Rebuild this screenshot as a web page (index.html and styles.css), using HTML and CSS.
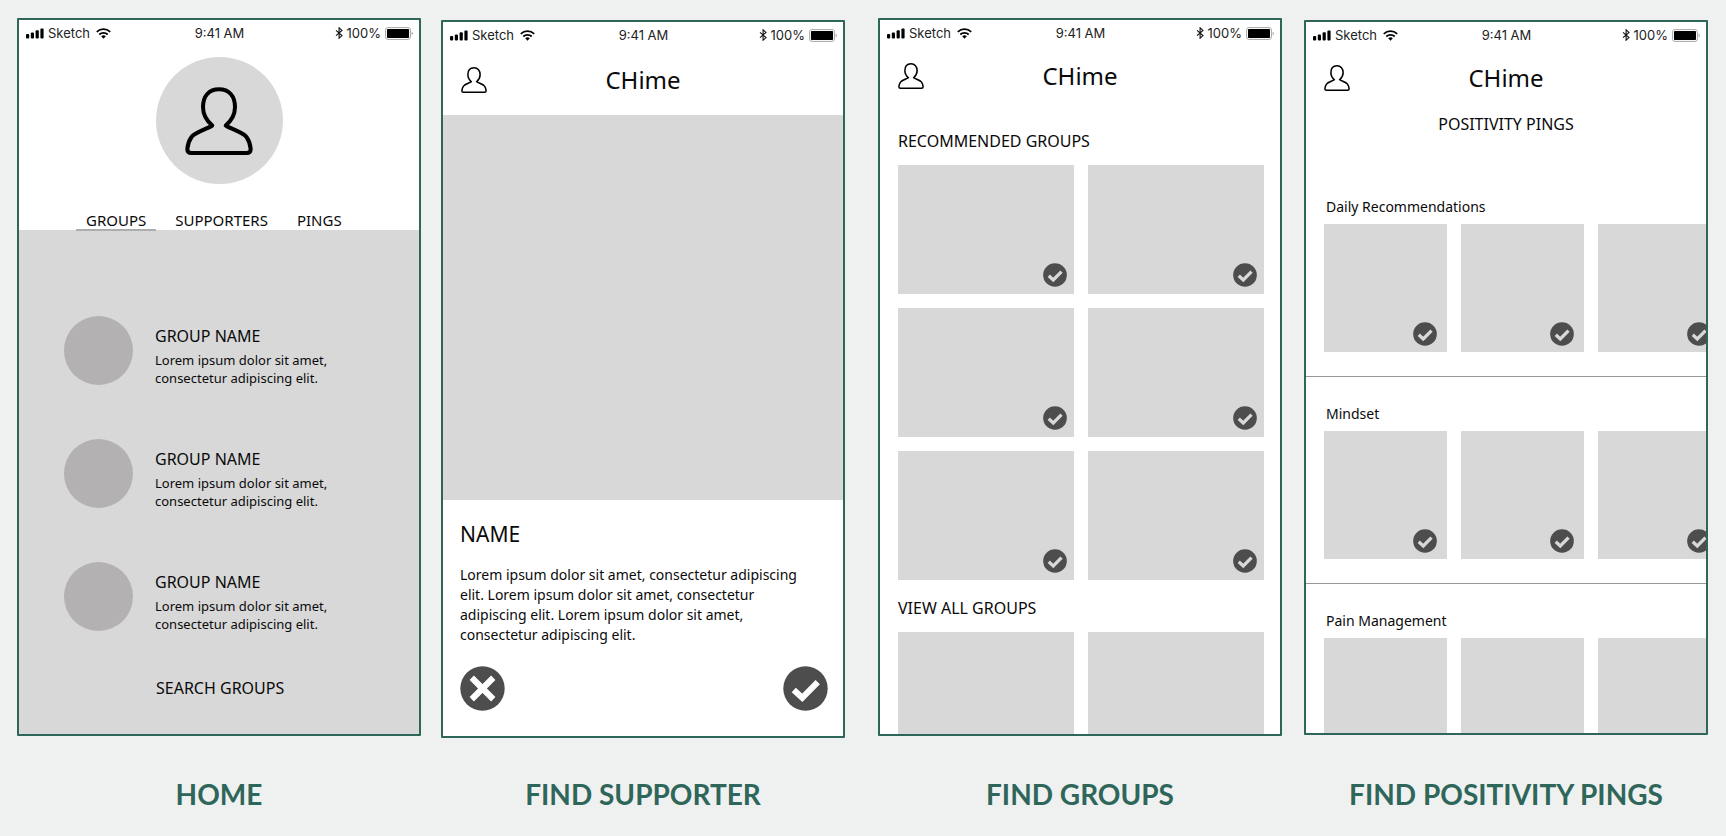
FILE: index.html
```html
<!DOCTYPE html>
<html lang="en">
<head>
<meta charset="utf-8">
<meta name="viewport" content="width=device-width, initial-scale=1">
<title>CHime wireframes</title>
<link rel="stylesheet" href="styles.css">
</head>
<body>
<svg class="sprite" aria-hidden="true">
  <symbol id="signal" viewBox="0 0 18 11">
    <rect x="0" y="6" width="3.2" height="4.6" rx="1"/><rect x="4.8" y="4.4" width="3.2" height="6.2" rx="1"/><rect x="9.6" y="2.3" width="3.2" height="8.3" rx="1"/><rect x="14.4" y="0.4" width="3.2" height="10.2" rx="1"/>
  </symbol>
  <symbol id="wifi" viewBox="0 0 15 11">
    <path d="M.8 3.9a9.6 9.6 0 0 1 13.4 0M3.3 6.5a6.1 6.1 0 0 1 8.4 0" fill="none" stroke="#000" stroke-width="1.8"/>
    <path d="M5.2 8.3a3.4 3.4 0 0 1 4.6 0L7.5 10.7z"/>
  </symbol>
  <symbol id="bluetooth" viewBox="0 0 8 12">
    <path d="M1 3.4 7 8.6 4.1 11.2V.8L7 3.4 1 8.6" fill="none" stroke="#111" stroke-width="1.1"/>
  </symbol>
  <symbol id="battery" viewBox="0 0 28 13">
    <rect x=".6" y=".6" width="24.8" height="11.8" rx="2.4" fill="#fff" stroke="#a6a6a6"/>
    <rect x="2" y="2" width="22" height="9" rx=".8"/>
    <path d="M26.6 4.6q1.2.6 1.2 1.9t-1.2 1.9z" fill="#a6a6a6"/>
  </symbol>
  <symbol id="user" viewBox="0 0 68 68">
    <path d="M34 2.2C24 2.2 18 9 18 20c0 7.600 4 14 9.300 18.500C21 42.500 10.500 45 6.500 50 4 53.500 2.700 57.500 2.300 62c0 2.600 1.600 4 4.200 4h55c2.600 0 4.200-1.400 4.200-4-.4-4.500-1.700-8.500-4.200-12-4-5-14.500-7.500-20.800-11.500C46 34 50 27.600 50 20 50 9 44 2.200 34 2.200z" fill="none" stroke="#000" stroke-width="4" stroke-linejoin="round"/>
  </symbol>
  <symbol id="check" viewBox="0 0 46 46">
    <circle cx="23" cy="23" r="22.700" fill="#4d4d4d"/>
    <path d="M11 24.500 19.700 32.500 35.500 16.500" fill="none" stroke="currentColor" stroke-width="6.200"/>
  </symbol>
  <symbol id="cross" viewBox="0 0 46 46">
    <circle cx="23" cy="23" r="22.700" fill="#4d4d4d"/>
    <path d="M12 12 34 34M34 12 12 34" fill="none" stroke="currentColor" stroke-width="6.200"/>
  </symbol>
</svg>

<main class="board">
  <figure class="screen">
    <section class="phone">
      <div class="status">
        <span class="status-side"><svg class="i-signal"><use href="#signal"/></svg><span>Sketch</span><svg class="i-wifi"><use href="#wifi"/></svg></span>
        <span>9:41 AM</span>
        <span class="status-side status-end"><svg class="i-bluetooth"><use href="#bluetooth"/></svg><span>100%</span><svg class="i-battery"><use href="#battery"/></svg></span>
      </div>
      <div class="avatar"><svg><use href="#user"/></svg></div>
      <nav class="tabs">
        <button class="tab tab-active">GROUPS</button>
        <button class="tab">SUPPORTERS</button>
        <button class="tab">PINGS</button>
      </nav>
      <div class="panel">
        <ul class="groups">
          <li class="group"><span class="dot"></span><div><h3>GROUP NAME</h3><p>Lorem ipsum dolor sit amet, consectetur adipiscing elit.</p></div></li>
          <li class="group"><span class="dot"></span><div><h3>GROUP NAME</h3><p>Lorem ipsum dolor sit amet, consectetur adipiscing elit.</p></div></li>
          <li class="group"><span class="dot"></span><div><h3>GROUP NAME</h3><p>Lorem ipsum dolor sit amet, consectetur adipiscing elit.</p></div></li>
        </ul>
        <button class="search">SEARCH GROUPS</button>
      </div>
    </section>
    <figcaption>HOME</figcaption>
  </figure>

  <figure class="screen screen-low">
    <section class="phone">
      <div class="status">
        <span class="status-side"><svg class="i-signal"><use href="#signal"/></svg><span>Sketch</span><svg class="i-wifi"><use href="#wifi"/></svg></span>
        <span>9:41 AM</span>
        <span class="status-side status-end"><svg class="i-bluetooth"><use href="#bluetooth"/></svg><span>100%</span><svg class="i-battery"><use href="#battery"/></svg></span>
      </div>
      <header class="bar bar-tall"><button class="icon-btn" aria-label="Profile"><svg><use href="#user"/></svg></button><h1>CHime</h1></header>
      <div class="photo"></div>
      <div class="bio">
        <h2>NAME</h2>
        <p>Lorem ipsum dolor sit amet, consectetur adipiscing elit. Lorem ipsum dolor sit amet, consectetur adipiscing elit. Lorem ipsum dolor sit amet, consectetur adipiscing elit.</p>
        <div class="choices">
          <button class="choice" aria-label="Decline"><svg><use href="#cross"/></svg></button>
          <button class="choice" aria-label="Accept"><svg><use href="#check"/></svg></button>
        </div>
      </div>
    </section>
    <figcaption>FIND SUPPORTER</figcaption>
  </figure>

  <figure class="screen">
    <section class="phone">
      <div class="status">
        <span class="status-side"><svg class="i-signal"><use href="#signal"/></svg><span>Sketch</span><svg class="i-wifi"><use href="#wifi"/></svg></span>
        <span>9:41 AM</span>
        <span class="status-side status-end"><svg class="i-bluetooth"><use href="#bluetooth"/></svg><span>100%</span><svg class="i-battery"><use href="#battery"/></svg></span>
      </div>
      <header class="bar"><button class="icon-btn" aria-label="Profile"><svg><use href="#user"/></svg></button><h1>CHime</h1></header>
      <div class="browse">
        <h2>RECOMMENDED GROUPS</h2>
        <div class="tiles">
          <div class="tile"><button class="pick" aria-label="Select group"><svg><use href="#check"/></svg></button></div>
          <div class="tile"><button class="pick" aria-label="Select group"><svg><use href="#check"/></svg></button></div>
          <div class="tile"><button class="pick" aria-label="Select group"><svg><use href="#check"/></svg></button></div>
          <div class="tile"><button class="pick" aria-label="Select group"><svg><use href="#check"/></svg></button></div>
          <div class="tile"><button class="pick" aria-label="Select group"><svg><use href="#check"/></svg></button></div>
          <div class="tile"><button class="pick" aria-label="Select group"><svg><use href="#check"/></svg></button></div>
        </div>
        <h2>VIEW ALL GROUPS</h2>
        <div class="tiles">
          <div class="tile"></div>
          <div class="tile"></div>
        </div>
      </div>
    </section>
    <figcaption>FIND GROUPS</figcaption>
  </figure>

  <figure class="screen screen-low">
    <section class="phone phone-short">
      <div class="status">
        <span class="status-side"><svg class="i-signal"><use href="#signal"/></svg><span>Sketch</span><svg class="i-wifi"><use href="#wifi"/></svg></span>
        <span>9:41 AM</span>
        <span class="status-side status-end"><svg class="i-bluetooth"><use href="#bluetooth"/></svg><span>100%</span><svg class="i-battery"><use href="#battery"/></svg></span>
      </div>
      <header class="bar"><button class="icon-btn" aria-label="Profile"><svg><use href="#user"/></svg></button><h1>CHime</h1></header>
      <h2 class="page-title">POSITIVITY PINGS</h2>
      <section class="shelf">
        <h3>Daily Recommendations</h3>
        <div class="row">
          <div class="card"><button class="pick" aria-label="Select ping"><svg><use href="#check"/></svg></button></div>
          <div class="card"><button class="pick" aria-label="Select ping"><svg><use href="#check"/></svg></button></div>
          <div class="card"><button class="pick" aria-label="Select ping"><svg><use href="#check"/></svg></button></div>
        </div>
      </section>
      <section class="shelf">
        <h3>Mindset</h3>
        <div class="row">
          <div class="card"><button class="pick" aria-label="Select ping"><svg><use href="#check"/></svg></button></div>
          <div class="card"><button class="pick" aria-label="Select ping"><svg><use href="#check"/></svg></button></div>
          <div class="card"><button class="pick" aria-label="Select ping"><svg><use href="#check"/></svg></button></div>
        </div>
      </section>
      <section class="shelf">
        <h3>Pain Management</h3>
        <div class="row">
          <div class="card"></div>
          <div class="card"></div>
          <div class="card"></div>
        </div>
      </section>
    </section>
    <figcaption>FIND POSITIVITY PINGS</figcaption>
  </figure>
</main>
</body>
</html>
```
FILE: styles.css
```css
*, *::before, *::after { box-sizing: border-box; }

body {
  margin: 0;
  background: #eff1f1;
  color: #0a0a0a;
  font-family: "Noto Sans", "Open Sans", sans-serif;
}

h1, h2, h3, p, ul, figure { margin: 0; padding: 0; font-weight: 400; }
ul { list-style: none; }
button {
  padding: 0;
  border: 0;
  background: none;
  color: inherit;
  font: inherit;
  cursor: pointer;
}
svg { display: block; }
.sprite { position: absolute; width: 0; height: 0; }

.board {
  display: flex;
  padding: 18px 18px 20px 17px;
}
.screen {
  flex: 1 1 0;
  min-width: 0;
  display: flex;
  flex-direction: column;
}
.screen + .screen { margin-left: 20px; }
.screen + .screen + .screen { margin-left: 33px; }
.screen + .screen + .screen + .screen { margin-left: 22px; }
.screen-low { padding-top: 2px; }

.phone {
  aspect-ratio: 404 / 718;
  overflow: hidden;
  display: flex;
  flex-direction: column;
  border: 2px solid #2f665a;
  border-radius: 1px;
  background: #fff;
}
.phone-short { aspect-ratio: 404 / 715; }
.phone > * { flex-shrink: 0; }

figcaption {
  margin-top: auto;
  padding-top: 40px;
  color: #2f665a;
  font-family: Lato, sans-serif;
  font-size: 28px;
  font-weight: 700;
  line-height: 32px;
  text-align: center;
}

/* Status bar */
.status {
  display: grid;
  grid-template-columns: 1fr auto 1fr;
  align-items: center;
  height: 26px;
  padding: 0 6px 0 7px;
  color: #222;
  font-family: Inter, sans-serif;
  font-size: 13px;
  line-height: 16px;
}
.status-side { display: flex; align-items: center; gap: 4px; }
.status-end { justify-content: flex-end; }
.i-signal { width: 18px; height: 11px; }
.i-wifi { width: 15px; height: 11px; margin-left: 2px; }
.i-bluetooth { width: 8px; height: 12px; }
.i-battery { width: 28px; height: 13px; }

/* App bar */
.bar {
  display: grid;
  grid-template-columns: 1fr auto 1fr;
  align-items: center;
  height: 60px;
  padding: 0 18px;
}
.bar-tall { height: 67px; padding-bottom: 3px; }
.bar h1 { font-size: 24px; line-height: 32px; }
.icon-btn, .icon-btn svg { width: 26px; height: 26px; }

/* Home */
.avatar {
  display: grid;
  place-items: center;
  width: 127px;
  height: 127px;
  margin: 11px auto 26px;
  border-radius: 50%;
  background: #d8d8d8;
}
.avatar svg { width: 68px; height: 68px; }
.tabs {
  position: relative;
  display: flex;
  gap: 9px;
  margin-bottom: -1px;
  padding-left: 57px;
}
.tab {
  padding: 1px 10px 0;
  border-bottom: 2px solid transparent;
  font-size: 15px;
  line-height: 18px;
}
.tab-active { border-bottom-color: #adadad; }
.panel {
  flex: 1;
  padding: 86px 45px 0;
  background: #d8d8d8;
}
.groups { display: grid; gap: 54px; }
.group { display: flex; gap: 22px; height: 69px; }
.dot {
  flex: none;
  width: 69px;
  height: 69px;
  border-radius: 50%;
  background: #b3b1b2;
}
.group div { width: 190px; padding-top: 10px; }
.group h3 { font-size: 16px; line-height: 20px; }
.group p { padding-top: 5px; font-size: 13px; line-height: 18px; }
.search {
  display: block;
  margin: 47px 0 0 92px;
  font-size: 16px;
  line-height: 20px;
}

/* Find supporter */
.photo { height: 385px; background: #d8d8d8; }
.bio { padding: 20px 15px 0 17px; }
.bio h2 { font-size: 21px; line-height: 28px; }
.bio p {
  max-width: 350px;
  padding-top: 17px;
  font-size: 14px;
  line-height: 20px;
}
.choices { display: flex; justify-content: space-between; padding-top: 21px; }
.choice, .choice svg { width: 45px; height: 45px; }
.choice { color: #fff; }

/* Find groups */
.browse { padding: 25px 16px 0 18px; }
.browse h2 { font-size: 16px; line-height: 20px; }
.tiles {
  display: grid;
  grid-template-columns: 1fr 1fr;
  gap: 14px;
  padding: 14px 0 18px;
}
.tile {
  display: flex;
  align-items: flex-end;
  justify-content: flex-end;
  height: 129px;
  padding: 7px;
  background: #d8d8d8;
}
.pick { color: #d8d8d8; }
.pick, .pick svg { width: 24px; height: 24px; }

/* Positivity pings */
.page-title {
  padding: 6px 0 36px;
  font-size: 16px;
  line-height: 20px;
  text-align: center;
}
.shelf {
  padding: 27px 0 24px 18px;
  border-bottom: 1px solid #979797;
}
.shelf h3 { padding: 0 0 7px 2px; font-size: 14px; line-height: 20px; }
.row { display: flex; gap: 14px; }
.card {
  flex: none;
  display: flex;
  align-items: flex-end;
  justify-content: flex-end;
  width: 123px;
  height: 128px;
  padding: 6px 10px;
  background: #d8d8d8;
}
```
